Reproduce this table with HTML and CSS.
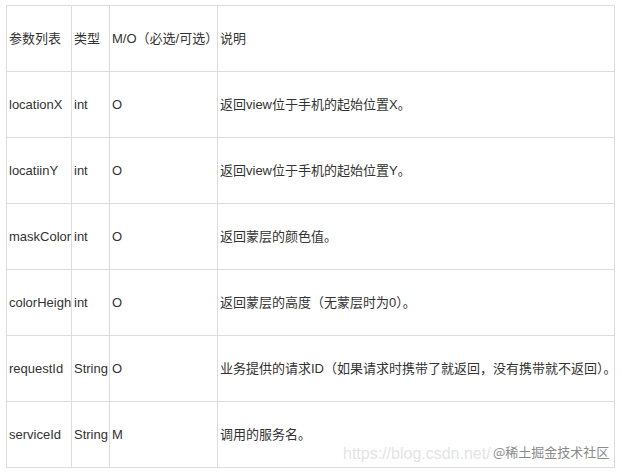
FILE: index.html
```html
<!DOCTYPE html>
<html lang="zh">
<head>
<meta charset="utf-8">
<link rel="stylesheet" href="styles.css">
</head>
<body>
<div class="page">
  <table class="params">
    <colgroup>
      <col class="c1"><col class="c2"><col class="c3"><col class="c4">
    </colgroup>
    <tr><td>参数列表</td><td>类型</td><td>M/O（必选/可选）</td><td>说明</td></tr>
    <tr><td>locationX</td><td>int</td><td>O</td><td>返回view位于手机的起始位置X。</td></tr>
    <tr><td>locatiinY</td><td>int</td><td>O</td><td>返回view位于手机的起始位置Y。</td></tr>
    <tr><td>maskColor</td><td>int</td><td>O</td><td>返回蒙层的颜色值。</td></tr>
    <tr><td>colorHeigh</td><td>int</td><td>O</td><td>返回蒙层的高度（无蒙层时为0）。</td></tr>
    <tr><td>requestId</td><td>String</td><td>O</td><td>业务提供的请求ID（如果请求时携带了就返回，没有携带就不返回）。</td></tr>
    <tr><td>serviceId</td><td>String</td><td>M</td><td>调用的服务名。</td></tr>
  </table>
  <div class="wm-url">https://blog.csdn.net/</div>
  <div class="wm-brand">@稀土掘金技术社区</div>
</div>
</body>
</html>
```
FILE: styles.css
```css
html, body {
  margin: 0;
  padding: 0;
  background: #fff;
}
.page {
  position: relative;
  width: 622px;
  height: 473px;
  padding: 5px 0 0 6px;
  box-sizing: border-box;
  font-family: "Liberation Sans", "Noto Sans CJK SC", sans-serif;
  font-size: 13px;
  color: #333;
}
.params {
  border-collapse: collapse;
  table-layout: fixed;
  width: 608px;
}
.params col.c1 { width: 65px; }
.params col.c2 { width: 38px; }
.params col.c3 { width: 108px; }
.params col.c4 { width: 397px; }
.params td {
  border: 1px solid #dcdcdc;
  height: 65px;
  padding: 0 2px;
  white-space: nowrap;
  vertical-align: middle;
  overflow: visible;
  line-height: 16px;
}
.wm-url {
  position: absolute;
  left: 343px;
  top: 445px;
  font-size: 16px;
  line-height: 18px;
  color: #e4e4e4;
  white-space: nowrap;
}
.wm-brand {
  position: absolute;
  left: 493px;
  top: 443px;
  font-size: 13px;
  color: #8a8a8a;
  white-space: nowrap;
  font-family: "Noto Sans CJK SC", sans-serif;
  line-height: 18px;
  text-shadow: 0 0 2px #fff, 0 0 2px #fff;
}
```
